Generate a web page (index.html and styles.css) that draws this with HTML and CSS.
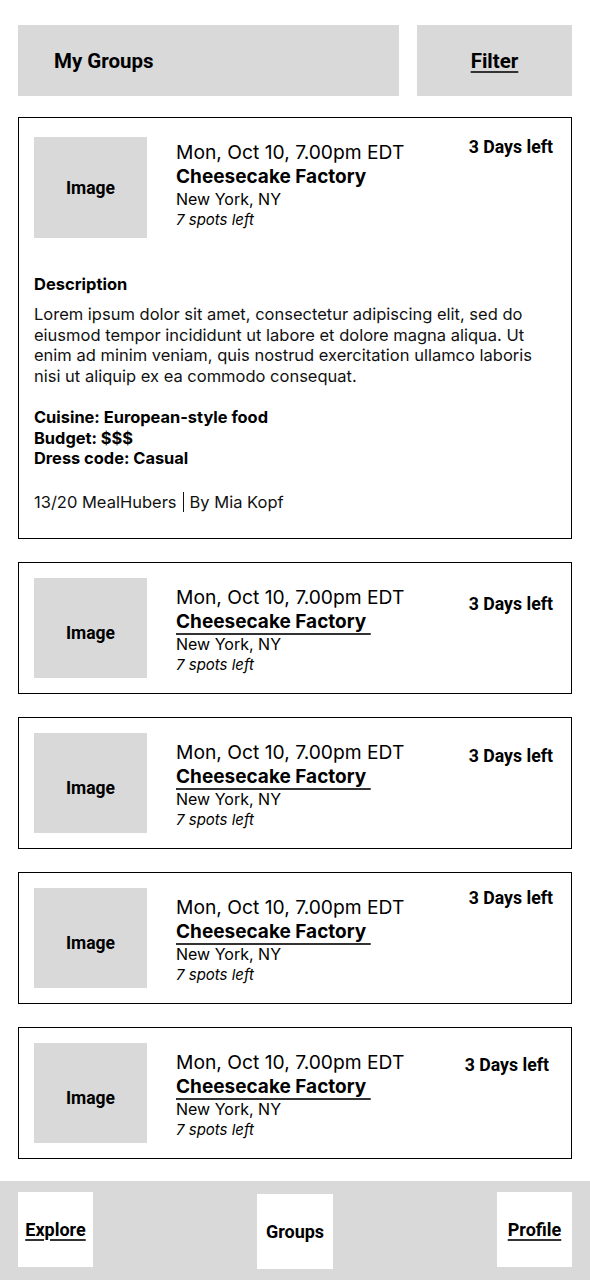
FILE: index.html
```html
<!DOCTYPE html>
<html lang="en">
<head>
<meta charset="utf-8">
<title>My Groups</title>
<link rel="stylesheet" href="styles.css">
</head>
<body>
<div class="page">
  <header class="topbar">
    <div class="title-box">My Groups</div>
    <div class="filter-box"><span class="link">Filter</span></div>
  </header>

  <main class="list">
    <article class="card card-open">
      <div class="row">
        <div class="thumb">Image</div>
        <div class="info info-open">
          <div class="date">Mon, Oct 10, 7.00pm EDT</div>
          <div class="name">Cheesecake Factory</div>
          <div class="loc">New York, NY</div>
          <div class="spots">7 spots left</div>
        </div>
        <div class="days days-a">3 Days left</div>
      </div>
      <div class="details">
        <div class="desc-title">Description</div>
        <p class="desc">Lorem ipsum dolor sit amet, consectetur adipiscing elit, sed do eiusmod tempor incididunt ut labore et dolore magna aliqua. Ut enim ad minim veniam, quis nostrud exercitation ullamco laboris nisi ut aliquip ex ea commodo consequat.</p>
        <div class="specs">
          <div>Cuisine: European-style food</div>
          <div>Budget: $$$</div>
          <div>Dress code: Casual</div>
        </div>
        <div class="meta">13/20 MealHubers <span class="sep"></span> By Mia Kopf</div>
      </div>
    </article>

    <article class="card">
      <div class="row">
        <div class="thumb">Image</div>
        <div class="info">
          <div class="date">Mon, Oct 10, 7.00pm EDT</div>
          <div class="name"><span class="uline">Cheesecake Factory&nbsp;</span></div>
          <div class="loc">New York, NY</div>
          <div class="spots">7 spots left</div>
        </div>
        <div class="days days-b">3 Days left</div>
      </div>
    </article>

    <article class="card">
      <div class="row">
        <div class="thumb">Image</div>
        <div class="info">
          <div class="date">Mon, Oct 10, 7.00pm EDT</div>
          <div class="name"><span class="uline">Cheesecake Factory&nbsp;</span></div>
          <div class="loc">New York, NY</div>
          <div class="spots">7 spots left</div>
        </div>
        <div class="days days-c">3 Days left</div>
      </div>
    </article>

    <article class="card">
      <div class="row">
        <div class="thumb">Image</div>
        <div class="info">
          <div class="date">Mon, Oct 10, 7.00pm EDT</div>
          <div class="name"><span class="uline">Cheesecake Factory&nbsp;</span></div>
          <div class="loc">New York, NY</div>
          <div class="spots">7 spots left</div>
        </div>
        <div class="days days-a">3 Days left</div>
      </div>
    </article>

    <article class="card">
      <div class="row">
        <div class="thumb">Image</div>
        <div class="info">
          <div class="date">Mon, Oct 10, 7.00pm EDT</div>
          <div class="name"><span class="uline">Cheesecake Factory&nbsp;</span></div>
          <div class="loc">New York, NY</div>
          <div class="spots">7 spots left</div>
        </div>
        <div class="days days-d">3 Days left</div>
      </div>
    </article>
  </main>

  <nav class="tabbar">
    <div class="tab"><span class="link">Explore</span></div>
    <div class="tab tab-mid">Groups</div>
    <div class="tab"><span class="link">Profile</span></div>
  </nav>
</div>
</body>
</html>
```

FILE: styles.css
```css
* { box-sizing: border-box; }

html, body {
  margin: 0;
  padding: 0;
  background: #ffffff;
}

body {
  font-family: Inter, "Noto Sans", sans-serif;
  color: #000;
}

.page {
  width: 590px;
  padding-top: 25px;
}

.topbar {
  display: flex;
  gap: 18px;
  margin: 0 18px;
  height: 71px;
}

.title-box,
.filter-box {
  background: #d9d9d9;
  display: flex;
  align-items: center;
  font-family: Roboto, "Liberation Sans", sans-serif;
  font-weight: 700;
  font-size: 20.5px;
}

.title-box {
  flex: 1;
  padding-left: 36px;
}

.filter-box {
  width: 155px;
  justify-content: center;
}

.link {
  text-decoration: underline;
  text-decoration-thickness: 2px;
  text-underline-offset: 3px;
  text-decoration-color: #333;
}

.list {
  margin: 21px 18px 0;
  display: flex;
  flex-direction: column;
  gap: 23px;
}

.card {
  border: 1px solid #000;
  padding: 15px 18px 15px 15px;
}

.card-open {
  padding-top: 19px;
  padding-bottom: 25px;
}

.row {
  display: flex;
  align-items: flex-start;
}

.thumb {
  width: 113px;
  height: 100px;
  flex: none;
  background: #d9d9d9;
  display: flex;
  align-items: center;
  justify-content: center;
  font-family: Roboto, "Liberation Sans", sans-serif;
  font-weight: 700;
  font-size: 17.5px;
  padding-top: 11px;
}

.card-open .thumb {
  height: 101px;
  padding-top: 1px;
}

.info {
  margin-left: 29px;
  margin-top: 7px;
}

.info-open {
  margin-top: 3px;
}

.date {
  font-size: 19.25px;
  line-height: 24px;
}

.name {
  font-size: 19px;
  font-weight: 700;
  line-height: 25px;
}

.uline {
  text-decoration: underline;
  text-decoration-thickness: 2px;
  text-underline-offset: 5px;
  text-decoration-color: #333;
}

.loc {
  font-size: 16px;
  line-height: 21px;
}

.spots {
  font-size: 15px;
  font-style: italic;
  line-height: 19px;
}

.days {
  margin-left: auto;
  font-family: Roboto, "Liberation Sans", sans-serif;
  font-weight: 700;
  font-size: 17.7px;
  line-height: 20px;
}

.days-a { margin-top: 0; }
.days-b { margin-top: 16px; }
.days-c { margin-top: 13px; }
.days-d { margin-top: 12px; margin-right: 4px; }

.details {
  margin-top: 36px;
  padding-right: 10px;
}

.desc-title {
  font-size: 16.5px;
  font-weight: 700;
  line-height: 20px;
}

.desc {
  margin: 10px 0 0;
  font-size: 16.5px;
  line-height: 20.7px;
  color: #111;
}

.specs {
  margin-top: 20px;
  font-size: 16.4px;
  font-weight: 700;
  line-height: 20.7px;
}

.meta {
  margin-top: 23px;
  font-size: 16.5px;
  line-height: 21px;
  color: #111;
  display: flex;
  align-items: center;
  gap: 6px;
}

.sep {
  display: inline-block;
  width: 1px;
  height: 20px;
  background: #111;
}

.tabbar {
  margin-top: 22px;
  background: #d9d9d9;
  height: 99px;
  padding: 11px 18px 0;
  display: flex;
  justify-content: space-between;
  align-items: flex-start;
}

.tab {
  width: 75px;
  height: 75px;
  background: #ffffff;
  display: flex;
  align-items: center;
  justify-content: center;
  font-family: Roboto, "Liberation Sans", sans-serif;
  font-weight: 700;
  font-size: 18px;
}

.tab-mid {
  margin-top: 2px;
  width: 76px;
}
```
